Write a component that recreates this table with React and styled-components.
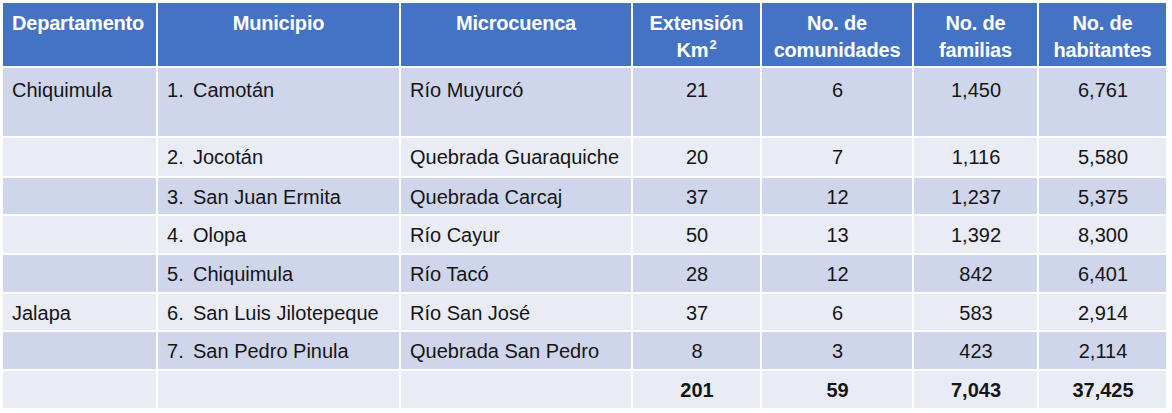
import React from "react";
import styled, { createGlobalStyle } from "styled-components";

const GlobalStyle = createGlobalStyle`
  html, body {
    margin: 0;
    padding: 0;
    background: #ffffff;
  }
  body {
    font-family: "Liberation Sans", Arial, sans-serif;
  }
`;

const Page = styled.div`
  padding: 3px 6px 0 3px;
`;

const Table = styled.table`
  width: 1163px;
  border-collapse: collapse;
  table-layout: fixed;
  color: #151515;
`;

const HeadCell = styled.th`
  background: #4472c4;
  color: #ffffff;
  font-size: 20px;
  font-weight: 700;
  line-height: 27px;
  letter-spacing: -0.2px;
  height: 64px;
  padding: 7px 4px 0;
  box-sizing: border-box;
  vertical-align: top;
  white-space: nowrap;
  text-align: ${(p) => (p.$left ? "left" : "center")};
  border: 2px solid #ffffff;
  border-top: none;
  &:first-child {
    border-left: none;
    padding-left: 9px;
  }
  &:last-child {
    border-right: none;
  }
`;

const Sup = styled.sup`
  font-size: 13px;
  line-height: 0;
  vertical-align: 8px;
  margin-left: 1px;
`;

const Row = styled.tr`
  background: ${(p) => (p.$dark ? "#cfd5ea" : "#e9ebf5")};
  height: ${(p) => p.$height || 39}px;
  & > td {
    padding-top: ${(p) => p.$pad || 7}px;
  }
`;

const Cell = styled.td`
  font-size: 20px;
  line-height: 24px;
  padding: 7px 8px 0 9px;
  box-sizing: border-box;
  vertical-align: top;
  white-space: nowrap;
  font-weight: ${(p) => (p.$bold ? 700 : 400)};
  text-align: ${(p) => (p.$center ? "center" : "left")};
  border: 2px solid #ffffff;
  &:first-child {
    border-left: none;
  }
  &:last-child {
    border-right: none;
  }
`;

const Num = styled.span`
  display: inline-block;
  width: 26px;
`;

const columns = [154, 243, 232, 129, 152, 125, 128];

const rows = [
  { dep: "Chiquimula", n: 1, mun: "Camotán", micro: "Río Muyurcó", ext: "21", com: "6", fam: "1,450", hab: "6,761", height: 70, pad: 10 },
  { dep: "", n: 2, mun: "Jocotán", micro: "Quebrada Guaraquiche", ext: "20", com: "7", fam: "1,116", hab: "5,580", height: 40 },
  { dep: "", n: 3, mun: "San Juan Ermita", micro: "Quebrada Carcaj", ext: "37", com: "12", fam: "1,237", hab: "5,375", height: 38 },
  { dep: "", n: 4, mun: "Olopa", micro: "Río Cayur", ext: "50", com: "13", fam: "1,392", hab: "8,300", height: 39 },
  { dep: "", n: 5, mun: "Chiquimula", micro: "Río Tacó", ext: "28", com: "12", fam: "842", hab: "6,401", height: 39 },
  { dep: "Jalapa", n: 6, mun: "San Luis Jilotepeque", micro: "Río San José", ext: "37", com: "6", fam: "583", hab: "2,914", height: 38 },
  { dep: "", n: 7, mun: "San Pedro Pinula", micro: "Quebrada San Pedro", ext: "8", com: "3", fam: "423", hab: "2,114", height: 39 },
];

export default function App() {
  return (
    <Page>
      <GlobalStyle />
      <Table>
        <colgroup>
          {columns.map((w, i) => (
            <col key={i} style={{ width: w }} />
          ))}
        </colgroup>
        <thead>
          <tr>
            <HeadCell $left>Departamento</HeadCell>
            <HeadCell>Municipio</HeadCell>
            <HeadCell>Microcuenca</HeadCell>
            <HeadCell>
              Extensión
              <br />
              Km<Sup>2</Sup>
            </HeadCell>
            <HeadCell>
              No. de
              <br />
              comunidades
            </HeadCell>
            <HeadCell>
              No. de
              <br />
              familias
            </HeadCell>
            <HeadCell>
              No. de
              <br />
              habitantes
            </HeadCell>
          </tr>
        </thead>
        <tbody>
          {rows.map((r, i) => (
            <Row key={r.n} $dark={i % 2 === 0} $height={r.height} $pad={r.pad}>
              <Cell>{r.dep}</Cell>
              <Cell>
                <Num>{r.n}.</Num>
                {r.mun}
              </Cell>
              <Cell>{r.micro}</Cell>
              <Cell $center>{r.ext}</Cell>
              <Cell $center>{r.com}</Cell>
              <Cell $center>{r.fam}</Cell>
              <Cell $center>{r.hab}</Cell>
            </Row>
          ))}
          <Row $height={39}>
            <Cell />
            <Cell />
            <Cell />
            <Cell $center $bold>201</Cell>
            <Cell $center $bold>59</Cell>
            <Cell $center $bold>7,043</Cell>
            <Cell $center $bold>37,425</Cell>
          </Row>
        </tbody>
      </Table>
    </Page>
  );
}
